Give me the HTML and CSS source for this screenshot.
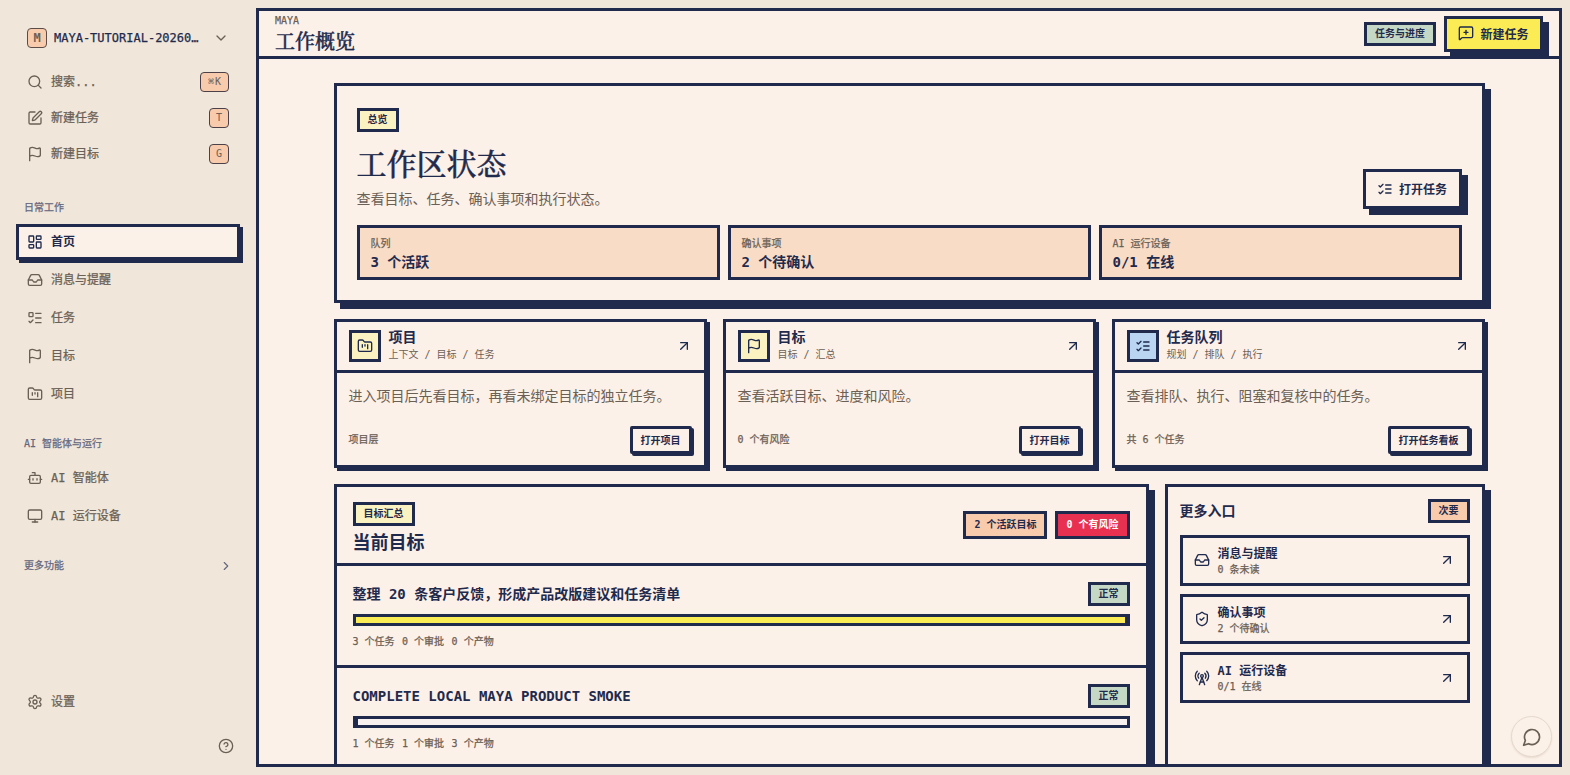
FILE: index.html
```html
<!DOCTYPE html>
<html lang="zh-CN">
<head>
    <meta charset="UTF-8">
    <meta name="viewport" content="width=device-width, initial-scale=1.0">
    <title>工作概览 - MAYA</title>
    <link rel="stylesheet" href="styles.css">
</head>
<body>

    <!-- icon set, stroke comes from .icon -->
    <svg class="sprite">
        <symbol id="search" viewBox="0 0 24 24"><circle cx="11" cy="11" r="8"/><path d="m21 21-4.3-4.3"/></symbol>
        <symbol id="pen" viewBox="0 0 24 24"><path d="M12 3H5a2 2 0 0 0-2 2v14a2 2 0 0 0 2 2h14a2 2 0 0 0 2-2v-7"/><path d="M18.375 2.625a1 1 0 0 1 3 3l-9.013 9.014a2 2 0 0 1-.853.505l-2.873.84a.5.5 0 0 1-.62-.62l.84-2.873a2 2 0 0 1 .506-.852z"/></symbol>
        <symbol id="flag" viewBox="0 0 24 24"><path d="M4 22V4a1 1 0 0 1 .4-.8A6 6 0 0 1 8 2c3 0 5 2 7.333 2q2 0 3.067-.8A1 1 0 0 1 20 4v10a1 1 0 0 1-.4.8A6 6 0 0 1 16 16c-3 0-5-2-8-2a6 6 0 0 0-4 1.528"/></symbol>
        <symbol id="dashboard" viewBox="0 0 24 24"><rect x="3" y="3" width="7" height="9" rx="1"/><rect x="14" y="3" width="7" height="5" rx="1"/><rect x="14" y="12" width="7" height="9" rx="1"/><rect x="3" y="16" width="7" height="5" rx="1"/></symbol>
        <symbol id="inbox" viewBox="0 0 24 24"><path d="M22 12h-6l-2 3h-4l-2-3H2"/><path d="M5.45 5.11 2 12v6a2 2 0 0 0 2 2h16a2 2 0 0 0 2-2v-6l-3.45-6.89A2 2 0 0 0 16.76 4H7.24a2 2 0 0 0-1.79 1.11z"/></symbol>
        <symbol id="todo" viewBox="0 0 24 24"><rect x="3" y="4" width="6" height="6" rx="1"/><path d="m3 17 2 2 4-4"/><path d="M13 5h8"/><path d="M13 12h8"/><path d="M13 19h8"/></symbol>
        <symbol id="checks" viewBox="0 0 24 24"><path d="m3 17 2 2 4-4"/><path d="m3 7 2 2 4-4"/><path d="M13 6h8"/><path d="M13 12h8"/><path d="M13 18h8"/></symbol>
        <symbol id="folder" viewBox="0 0 24 24"><path d="M4 20h16a2 2 0 0 0 2-2V8a2 2 0 0 0-2-2h-7.93a2 2 0 0 1-1.66-.9l-.82-1.2A2 2 0 0 0 7.93 3H4a2 2 0 0 0-2 2v13c0 1.1.9 2 2 2Z"/><path d="M8 10v4"/><path d="M12 10v2"/><path d="M16 10v6"/></symbol>
        <symbol id="bot" viewBox="0 0 24 24"><path d="M12 8V4H8"/><rect x="4" y="8" width="16" height="12" rx="2"/><path d="M2 14h2"/><path d="M20 14h2"/><path d="M15 13v2"/><path d="M9 13v2"/></symbol>
        <symbol id="monitor" viewBox="0 0 24 24"><rect x="2" y="3" width="20" height="14" rx="2"/><path d="M8 21h8"/><path d="M12 17v4"/></symbol>
        <symbol id="gear" viewBox="0 0 24 24"><path d="M9.671 4.136a2.34 2.34 0 0 1 4.659 0 2.34 2.34 0 0 0 3.319 1.915 2.34 2.34 0 0 1 2.33 4.033 2.34 2.34 0 0 0 0 3.831 2.34 2.34 0 0 1-2.33 4.033 2.34 2.34 0 0 0-3.319 1.915 2.34 2.34 0 0 1-4.659 0 2.34 2.34 0 0 0-3.32-1.915 2.34 2.34 0 0 1-2.33-4.033 2.34 2.34 0 0 0 0-3.831A2.34 2.34 0 0 1 6.35 6.051a2.34 2.34 0 0 0 3.319-1.915"/><circle cx="12" cy="12" r="3"/></symbol>
        <symbol id="help" viewBox="0 0 24 24"><circle cx="12" cy="12" r="10"/><path d="M9.09 9a3 3 0 0 1 5.83 1c0 2-3 3-3 3"/><path d="M12 17h.01"/></symbol>
        <symbol id="down" viewBox="0 0 24 24"><path d="m6 9 6 6 6-6"/></symbol>
        <symbol id="right" viewBox="0 0 24 24"><path d="m9 18 6-6-6-6"/></symbol>
        <symbol id="arrow" viewBox="0 0 24 24"><path d="M7 7h10v10"/><path d="M7 17 17 7"/></symbol>
        <symbol id="msgplus" viewBox="0 0 24 24"><path d="M22 17a2 2 0 0 1-2 2H6.828a2 2 0 0 0-1.414.586l-2.202 2.202A.71.71 0 0 1 2 21.286V5a2 2 0 0 1 2-2h16a2 2 0 0 1 2 2z"/><path d="M12 8v6"/><path d="M9 11h6"/></symbol>
        <symbol id="shield" viewBox="0 0 24 24"><path d="M20 13c0 5-3.500 7.500-7.660 8.950a1 1 0 0 1-.67-.01C7.500 20.500 4 18 4 13V6a1 1 0 0 1 1-1c2 0 4.500-1.200 6.240-2.720a1.170 1.170 0 0 1 1.520 0C14.510 3.810 17 5 19 5a1 1 0 0 1 1 1z"/><path d="m9 12 2 2 4-4"/></symbol>
        <symbol id="tower" viewBox="0 0 24 24"><path d="M4.900 16.100C1 12.200 1 5.800 4.900 1.900"/><path d="M7.800 4.700a6.140 6.140 0 0 0-.8 7.500"/><circle cx="12" cy="9" r="2"/><path d="M16.200 4.800c2 2 2.260 5.110.8 7.470"/><path d="M19.100 1.900a9.960 9.960 0 0 1 0 14.100"/><path d="M9.500 18h5"/><path d="m8 22 4-11 4 11"/></symbol>
        <symbol id="chat" viewBox="0 0 24 24"><path d="M7.900 20A9 9 0 1 0 4 16.100L2 22Z"/></symbol>
    </svg>

    <div class="app">
        <aside class="sidebar">
            <div class="workspace">
                <span class="avatar">M</span>
                <span class="workspace-name">MAYA-TUTORIAL-20260…</span>
                <svg class="icon"><use href="#down"/></svg>
            </div>

            <div class="quick">
                <a class="nav-item"><svg class="icon"><use href="#search"/></svg>搜索...<kbd class="wide">⌘K</kbd></a>
                <a class="nav-item"><svg class="icon"><use href="#pen"/></svg>新建任务<kbd>T</kbd></a>
                <a class="nav-item"><svg class="icon"><use href="#flag"/></svg>新建目标<kbd>G</kbd></a>
            </div>

            <div class="nav-label">日常工作</div>
            <nav class="nav">
                <a class="nav-item active"><svg class="icon"><use href="#dashboard"/></svg>首页</a>
                <a class="nav-item"><svg class="icon"><use href="#inbox"/></svg>消息与提醒</a>
                <a class="nav-item"><svg class="icon"><use href="#todo"/></svg>任务</a>
                <a class="nav-item"><svg class="icon"><use href="#flag"/></svg>目标</a>
                <a class="nav-item"><svg class="icon"><use href="#folder"/></svg>项目</a>
            </nav>

            <div class="nav-label">AI 智能体与运行</div>
            <nav class="nav">
                <a class="nav-item"><svg class="icon"><use href="#bot"/></svg>AI 智能体</a>
                <a class="nav-item"><svg class="icon"><use href="#monitor"/></svg>AI 运行设备</a>
            </nav>

            <div class="nav-label">更多功能<svg class="icon small"><use href="#right"/></svg></div>

            <div class="sidebar-bottom">
                <a class="nav-item"><svg class="icon"><use href="#gear"/></svg>设置</a>
                <div class="help"><svg class="icon"><use href="#help"/></svg></div>
            </div>
        </aside>

        <main class="main">
            <header class="topbar">
                <div>
                    <div class="crumb">MAYA</div>
                    <h1>工作概览</h1>
                </div>
                <div class="topbar-actions">
                    <span class="badge green">任务与进度</span>
                    <button class="btn primary"><svg class="icon"><use href="#msgplus"/></svg>新建任务</button>
                </div>
            </header>

            <div class="scroll">
                <section class="hero">
                    <div class="hero-top">
                        <div>
                            <span class="badge yellow">总览</span>
                            <h2>工作区状态</h2>
                            <p>查看目标、任务、确认事项和执行状态。</p>
                        </div>
                        <button class="btn"><svg class="icon"><use href="#checks"/></svg>打开任务</button>
                    </div>
                    <div class="stats">
                        <div class="stat"><span>队列</span><strong>3 个活跃</strong></div>
                        <div class="stat"><span>确认事项</span><strong>2 个待确认</strong></div>
                        <div class="stat"><span>AI 运行设备</span><strong>0/1 在线</strong></div>
                    </div>
                </section>

                <section class="cards">
                    <article class="card">
                        <div class="card-head">
                            <span class="card-icon"><svg class="icon"><use href="#folder"/></svg></span>
                            <div><h3>项目</h3><small>上下文 / 目标 / 任务</small></div>
                            <svg class="icon go"><use href="#arrow"/></svg>
                        </div>
                        <div class="card-body">
                            <p>进入项目后先看目标，再看未绑定目标的独立任务。</p>
                            <div class="card-foot"><span>项目层</span><button class="btn-small">打开项目</button></div>
                        </div>
                    </article>
                    <article class="card">
                        <div class="card-head">
                            <span class="card-icon"><svg class="icon"><use href="#flag"/></svg></span>
                            <div><h3>目标</h3><small>目标 / 汇总</small></div>
                            <svg class="icon go"><use href="#arrow"/></svg>
                        </div>
                        <div class="card-body">
                            <p>查看活跃目标、进度和风险。</p>
                            <div class="card-foot"><span>0 个有风险</span><button class="btn-small">打开目标</button></div>
                        </div>
                    </article>
                    <article class="card">
                        <div class="card-head">
                            <span class="card-icon blue"><svg class="icon"><use href="#checks"/></svg></span>
                            <div><h3>任务队列</h3><small>规划 / 排队 / 执行</small></div>
                            <svg class="icon go"><use href="#arrow"/></svg>
                        </div>
                        <div class="card-body">
                            <p>查看排队、执行、阻塞和复核中的任务。</p>
                            <div class="card-foot"><span>共 6 个任务</span><button class="btn-small">打开任务看板</button></div>
                        </div>
                    </article>
                </section>

                <section class="lower">
                    <div class="panel">
                        <div class="goals-head">
                            <div>
                                <span class="badge yellow">目标汇总</span>
                                <h2>当前目标</h2>
                            </div>
                            <div class="chips">
                                <span class="badge tall peach">2 个活跃目标</span>
                                <span class="badge tall red">0 个有风险</span>
                            </div>
                        </div>
                        <div class="goal">
                            <div class="goal-title">整理 20 条客户反馈，形成产品改版建议和任务清单<span class="badge green">正常</span></div>
                            <div class="progress"><div class="progress-fill" style="width: 100%"></div></div>
                            <div class="goal-meta"><span>3 个任务</span><span>0 个审批</span><span>0 个产物</span></div>
                        </div>
                        <div class="goal">
                            <div class="goal-title">COMPLETE LOCAL MAYA PRODUCT SMOKE<span class="badge green">正常</span></div>
                            <div class="progress"><div class="progress-fill" style="width: 0%"></div></div>
                            <div class="goal-meta"><span>1 个任务</span><span>1 个审批</span><span>3 个产物</span></div>
                        </div>
                    </div>

                    <div class="panel entries">
                        <div class="entries-head"><h3>更多入口</h3><span class="badge peach">次要</span></div>
                        <a class="entry">
                            <svg class="icon"><use href="#inbox"/></svg>
                            <div><strong>消息与提醒</strong><small>0 条未读</small></div>
                            <svg class="icon go"><use href="#arrow"/></svg>
                        </a>
                        <a class="entry">
                            <svg class="icon"><use href="#shield"/></svg>
                            <div><strong>确认事项</strong><small>2 个待确认</small></div>
                            <svg class="icon go"><use href="#arrow"/></svg>
                        </a>
                        <a class="entry">
                            <svg class="icon"><use href="#tower"/></svg>
                            <div><strong>AI 运行设备</strong><small>0/1 在线</small></div>
                            <svg class="icon go"><use href="#arrow"/></svg>
                        </a>
                    </div>
                </section>
            </div>
        </main>
    </div>

    <button class="chat-btn"><svg class="icon"><use href="#chat"/></svg></button>

</body>
</html>
```
FILE: styles.css
```css
:root {
    --ink: #1f2a4d;
    --paper: #fcf1e8;
    --sand: #f0e7da;
    --muted: #6b6055;
    --peach: #f8cbac;
    --mono: "DejaVu Sans Mono", "Noto Sans CJK SC", monospace;
}
* {
    box-sizing: border-box;
    margin: 0;
    padding: 0;
}
body {
    height: 100vh;
    overflow: hidden;
    background: var(--sand);
    color: var(--ink);
    font-family: var(--mono);
    font-size: 12px;
    line-height: 16px;
}
button {
    font-family: inherit;
    color: inherit;
}
.sprite {
    display: none;
}
.icon {
    width: 16px;
    height: 16px;
    flex: none;
    fill: none;
    stroke: currentColor;
    stroke-width: 2;
    stroke-linecap: round;
    stroke-linejoin: round;
}
.icon.small {
    width: 14px;
    height: 14px;
}
.go {
    margin-left: auto;
}
.app {
    display: flex;
    height: 100vh;
}

/* medium weight, the mono stack only has regular and bold */
.nav-item,
.nav-label,
.workspace-name,
.crumb,
.stat span,
.card-foot span,
.goal-meta,
.entry small {
    -webkit-text-stroke: 0.25px currentColor;
}

/* sidebar */
.sidebar {
    width: 256px;
    flex: none;
    display: flex;
    flex-direction: column;
    padding: 20px 16px 18px;
    color: var(--muted);
}
.workspace {
    display: flex;
    align-items: center;
    height: 36px;
    padding: 0 11px;
    color: var(--ink);
}
.workspace .icon {
    margin-left: auto;
    color: var(--muted);
}
.avatar {
    width: 20px;
    height: 20px;
    margin-right: 7px;
    border: 1px solid #5c4b47;
    border-radius: 4px;
    background: var(--peach);
    color: var(--muted);
    font-size: 12px;
    font-weight: 600;
    line-height: 18px;
    text-align: center;
}
.workspace-name {
    white-space: nowrap;
}
.quick {
    padding-top: 8px;
}
.nav-item {
    display: flex;
    align-items: center;
    gap: 8px;
    height: 36px;
    padding: 0 11px;
}
kbd {
    min-width: 20px;
    height: 20px;
    margin-left: auto;
    padding: 0 6px;
    border: 1px solid #4c4148;
    border-radius: 4px;
    background: var(--peach);
    font-family: inherit;
    font-size: 10px;
    line-height: 18px;
    text-align: center;
    -webkit-text-stroke: 0;
}
kbd.wide {
    padding: 0 6px 0 7px;
    letter-spacing: 1px;
}
.nav-label {
    display: flex;
    align-items: center;
    justify-content: space-between;
    height: 32px;
    margin-top: 20px;
    padding: 0 7px 0 8px;
    color: #666880;
    font-size: 10px;
}
.nav {
    display: flex;
    flex-direction: column;
    gap: 2px;
}
.nav + .nav-label {
    margin-top: 16px;
}
.nav .nav-item.active {
    padding: 0 8px;
    border: 3px solid var(--ink);
    background: var(--paper);
    box-shadow: 3px 3px 0 var(--ink);
    color: var(--ink);
    font-weight: 600;
    -webkit-text-stroke: 0;
}
.sidebar-bottom {
    margin-top: auto;
}
.help {
    display: flex;
    justify-content: flex-end;
    padding: 18px 6px 3px;
}

/* main frame */
.main {
    flex: 1;
    display: flex;
    flex-direction: column;
    margin: 8px 8px 8px 0;
    border: 3px solid var(--ink);
    background: var(--paper);
    overflow: hidden;
}
.topbar {
    display: flex;
    align-items: center;
    justify-content: space-between;
    height: 48px;
    flex: none;
    padding: 0 16px;
    border-bottom: 3px solid var(--ink);
}
.crumb {
    color: var(--muted);
    font-size: 10px;
    line-height: 14px;
}
h1,
.hero h2 {
    font-family: "Noto Serif CJK SC", "Noto Serif SC", "Songti SC", "Noto Sans CJK SC", serif;
    font-weight: 500;
    -webkit-text-stroke: 0.4px currentColor;
}
h1 {
    font-size: 20px;
    line-height: 26px;
}
.topbar-actions {
    display: flex;
    align-items: center;
    gap: 8px;
}
.badge {
    display: inline-flex;
    align-items: center;
    height: 24px;
    padding: 0 8px;
    border: 3px solid var(--ink);
    font-size: 10px;
    font-weight: 600;
    white-space: nowrap;
}
.badge.tall {
    height: 28px;
}
.green {
    background: #c5d8c6;
}
.yellow {
    background: #fbf2c2;
}
.peach {
    background: var(--peach);
}
.red {
    background: #e83150;
    color: #fff;
}
.btn {
    display: flex;
    align-items: center;
    justify-content: center;
    gap: 6px;
    width: 99px;
    height: 40px;
    padding-bottom: 1px;
    border: 3px solid var(--ink);
    background: var(--paper);
    box-shadow: 6px 6px 0 var(--ink);
    font-size: 12px;
    font-weight: 600;
}
.btn.primary {
    height: 36px;
    background: #fbec55;
}
.scroll {
    flex: 1;
    width: 1151px;
    margin: 0 auto;
    padding-top: 24px;
}

/* overview */
.hero {
    height: 220px;
    padding: 20px;
    border: 3px solid var(--ink);
    box-shadow: 6px 6px 0 var(--ink);
}
.hero-top {
    display: flex;
    align-items: flex-end;
    justify-content: space-between;
    height: 103px;
    margin-bottom: 16px;
}
.hero-top > div {
    margin-bottom: -2px;
}
.hero h2 {
    margin-top: 10px;
    font-size: 30px;
    line-height: 40px;
}
.hero p {
    margin-top: 5px;
    color: var(--muted);
    font-size: 14px;
    line-height: 24px;
}
.stats {
    display: grid;
    grid-template-columns: repeat(3, 1fr);
    gap: 8px;
}
.stat {
    display: flex;
    flex-direction: column;
    justify-content: center;
    height: 55px;
    padding: 2px 11px 0;
    border: 3px solid var(--ink);
    background: #f8dcc6;
}
.stat span {
    color: var(--muted);
    font-size: 10px;
}
.stat strong {
    font-size: 14px;
    line-height: 20px;
}

/* section cards */
.cards {
    display: grid;
    grid-template-columns: repeat(3, 1fr);
    gap: 16px;
    margin-top: 16px;
}
.card {
    height: 149px;
    border: 3px solid var(--ink);
    box-shadow: 3px 3px 0 var(--ink);
}
.card-head {
    display: flex;
    align-items: center;
    gap: 8px;
    height: 51px;
    padding: 0 12px 1px;
    border-bottom: 3px solid var(--ink);
}
.card-head > div {
    margin-top: -2px;
}
.card-icon {
    display: flex;
    align-items: center;
    justify-content: center;
    width: 32px;
    height: 32px;
    border: 3px solid var(--ink);
    background: #fbf2c2;
}
.card-icon.blue {
    background: #b9d5f1;
}
.card-head h3,
.entries-head h3 {
    font-size: 14px;
    font-weight: 600;
    line-height: 20px;
}
.card-head small {
    display: block;
    color: var(--muted);
    font-size: 10px;
}
.card-body {
    display: flex;
    flex-direction: column;
    justify-content: space-between;
    height: 92px;
    padding: 13px 12px 11px;
}
.card-body p {
    color: var(--muted);
    font-size: 14px;
    line-height: 20px;
    white-space: nowrap;
}
.card-foot {
    display: flex;
    align-items: center;
    justify-content: space-between;
    color: var(--muted);
    font-size: 10px;
}
.btn-small {
    height: 28px;
    padding: 0 8px 2px;
    border: 3px solid var(--ink);
    border-radius: 2px;
    background: var(--paper);
    box-shadow: 2px 2px 0 var(--ink);
    color: var(--ink);
    font-size: 10px;
    font-weight: 600;
}

/* goals and side entries */
.lower {
    display: grid;
    grid-template-columns: 1fr 320px;
    gap: 16px;
    height: 420px;
    margin-top: 16px;
}
.panel {
    border: 3px solid var(--ink);
    box-shadow: 6px 6px 0 var(--ink);
}
.goals-head {
    display: flex;
    justify-content: space-between;
    height: 76px;
    padding: 15px 16px 0;
}
.goals-head h2 {
    margin-top: 5px;
    font-size: 18px;
    font-weight: 600;
    line-height: 24px;
}
.chips {
    display: flex;
    gap: 8px;
    padding-top: 9px;
}
.goal {
    height: 102px;
    padding: 16px;
    border-top: 3px solid var(--ink);
}
.goal + .goal {
    height: 240px;
}
.goal-title {
    display: flex;
    align-items: center;
    justify-content: space-between;
    font-size: 14px;
    font-weight: 600;
}
.progress {
    height: 12px;
    margin-top: 8px;
    border: 3px solid var(--ink);
    background: #f8f1f0;
}
.progress-fill {
    height: 100%;
    border-right: 2px solid var(--ink);
    background: #fbec55;
}
.goal-meta {
    display: flex;
    gap: 7.5px;
    margin-top: 8px;
    color: var(--muted);
    font-size: 10px;
}
.entries {
    display: flex;
    flex-direction: column;
    gap: 8px;
    padding: 12px;
}
.entries-head {
    display: flex;
    align-items: center;
    justify-content: space-between;
    margin-bottom: 4px;
}
.entry {
    display: flex;
    align-items: center;
    gap: 8px;
    height: 50.7px;
    padding: 0 12px 0 11px;
    border: 3px solid var(--ink);
}
.entry div {
    padding-top: 3px;
}
.entry strong,
.entry small {
    display: block;
    line-height: 15px;
}
.entry small {
    color: var(--muted);
    font-size: 10px;
}
.chat-btn {
    position: absolute;
    right: 18px;
    bottom: 18px;
    display: flex;
    align-items: center;
    justify-content: center;
    width: 41px;
    height: 41px;
    border: 1px solid #e6dacd;
    border-radius: 50%;
    background: var(--paper);
    color: var(--muted);
    box-shadow: 0 1px 2px rgba(80, 60, 40, 0.12);
}
.chat-btn .icon {
    width: 20px;
    height: 20px;
}
```
